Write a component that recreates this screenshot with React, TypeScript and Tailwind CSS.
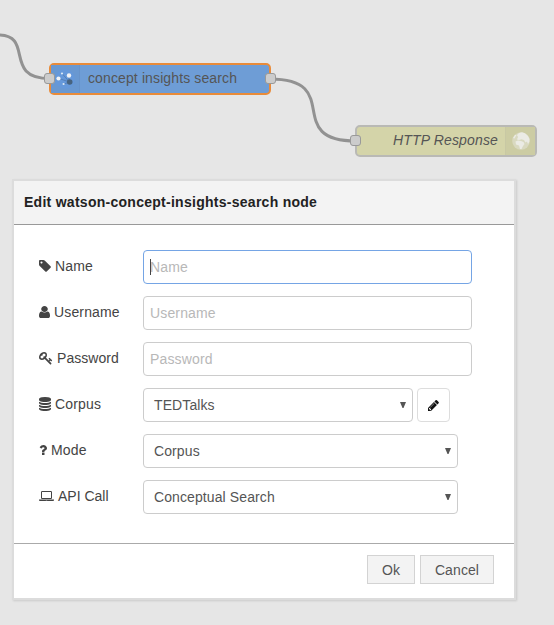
import type { ReactNode } from 'react';

const ICONS = {
  tag: { w: 1536, d: 'M448 448q0-53-37.5-90.5t-90.5-37.5-90.5 37.5-37.5 90.5 37.5 90.5 90.5 37.5 90.5-37.5 37.5-90.5zm1067 576q0 53-37 90l-491 492q-39 37-91 37-53 0-90-37l-715-716q-38-37-64.5-101t-26.5-117v-416q0-52 38-90t90-38h416q53 0 117 26.5t102 64.5l715 714q37 39 37 91z' },
  user: { w: 1280, d: 'M1280 1399q0 109-62.5 187t-150.5 78h-854q-88 0-150.5-78t-62.5-187q0-85 8.5-160.5t31.5-152 58.5-131 94-89 134.5-34.5q131 128 313 128t313-128q76 0 134.5 34.5t94 89 58.5 131 31.5 152 8.5 160.5zm-256-887q0 159-112.5 271.5t-271.5 112.5-271.5-112.5-112.5-271.5 112.5-271.5 271.5-112.5 271.5 112.5 112.5 271.5z' },
  key: { w: 1792, d: 'M832 512q0-80-56-136t-136-56-136 56-56 136q0 42 19 83-41-19-83-19-80 0-136 56t-56 136 56 136 136 56 136-56 56-136q0-42-19-83 41 19 83 19 80 0 136-56t56-136zm851 704q0 17-49 66t-66 49q-9 0-28.5-16t-36.5-33-38.5-40-24.5-26l-96 96 220 220q28 28 28 68 0 42-39 81t-81 39q-40 0-68-28l-671-671q-176 131-365 131-163 0-265.5-102.5t-102.5-265.5q0-160 95-313t248-248 313-95q163 0 265.5 102.5t102.5 265.5q0 189-131 365l355 355 96-96q-3-3-26-24.5t-40-38.5-33-36.5-16-28.5q0-17 49-66t66-49q13 0 23 10 6 6 46 44.5t82 79.5 86.5 86 73 78 28.5 41z' },
  database: { w: 1536, d: 'M768 768q237 0 443-43t325-127v170q0 69-103 128t-280 93.5-385 34.5-385-34.5-280-93.5-103-128v-170q119 84 325 127t443 43zm0 768q237 0 443-43t325-127v170q0 69-103 128t-280 93.5-385 34.5-385-34.5-280-93.5-103-128v-170q119 84 325 127t443 43zm0-384q237 0 443-43t325-127v170q0 69-103 128t-280 93.5-385 34.5-385-34.5-280-93.5-103-128v-170q119 84 325 127t443 43zm0-1152q208 0 385 34.5t280 93.5 103 128v128q0 69-103 128t-280 93.5-385 34.5-385-34.5-280-93.5-103-128v-128q0-69 103-128t280-93.5 385-34.5z' },
  question: { w: 1024, d: 'M704 1256v240q0 16-12 28t-28 12h-240q-16 0-28-12t-12-28v-240q0-16 12-28t28-12h240q16 0 28 12t12 28zm316-600q0 54-15.5 101t-35 76.5-55 59.5-57.5 43.5-61 35.5q-41 23-68.5 65t-27.5 67q0 17-12 32.5t-28 15.5h-240q-15 0-25.5-18.5t-10.5-37.5v-45q0-83 65-156.5t143-108.5q59-27 84-56t25-76q0-42-46.5-74t-107.5-32q-65 0-108 29-35 25-107 115-13 16-31 16-12 0-25-8l-164-125q-13-10-15.5-25t5.5-28q160-266 464-266 80 0 161 31t146 83 106 127.5 41 158.5z' },
  laptop: { w: 1920, d: 'M416 1280q-66 0-113-47t-47-113v-704q0-66 47-113t113-47h1088q66 0 113 47t47 113v704q0 66-47 113t-113 47h-1088zm-32-864v704q0 13 9.5 22.5t22.5 9.5h1088q13 0 22.5-9.5t9.5-22.5v-704q0-13-9.5-22.5t-22.5-9.5h-1088q-13 0-22.5 9.5t-9.5 22.5zm1376 928h160v96q0 40-47 68t-113 28h-1600q-66 0-113-28t-47-68v-96h1760zm-720 96q16 0 16-16t-16-16h-160q-16 0-16 16t16 16h160z' },
  pencil: { w: 1536, d: 'M363 1536l91-91-235-235-91 91v107h128v128h107zm523-928q0-22-22-22-10 0-17 7l-542 542q-7 7-7 17 0 22 22 22 10 0 17-7l542-542q7-7 7-17zm-54-192l416 416-832 832h-416v-416zm683 96q0 53-37 90l-166 166-416-416 166-165q36-38 90-38 53 0 91 38l235 234q37 39 37 91z' },
};

function Icon({ name, className = 'h-[14px]' }: { name: keyof typeof ICONS; className?: string }) {
  const { w, d } = ICONS[name];
  return (
    <svg viewBox={`0 0 ${w} 1792`} fill="currentColor" preserveAspectRatio="none" className={`shrink-0 ${className}`}>
      <path d={d} />
    </svg>
  );
}

function Row({ icon, iconSize, label, labelStyle, children }: { icon: keyof typeof ICONS; iconSize: string; label: string; labelStyle: string; children: ReactNode }) {
  return (
    <div className="flex h-[34px]">
      <label className="flex h-8 w-[104px] shrink-0 items-center text-[#444]">
        <Icon name={icon} className={iconSize} />
        <span className={labelStyle}>{label}</span>
      </label>
      {children}
    </div>
  );
}

function Field({ placeholder, focused }: { placeholder: string; focused?: boolean }) {
  return (
    <div className={`relative h-[34px] w-[329px] rounded border bg-white ${focused ? 'border-[#75a5e5]' : 'border-[#ccc]'}`}>
      <input placeholder={placeholder} className="h-full w-full bg-transparent px-[6px] tracking-[0.15px] text-[#555] outline-none placeholder:text-[#b8b8b8]" />
      {focused && <span className="absolute left-[6px] top-2 h-4 w-px bg-[#444]" />}
    </div>
  );
}

function Select({ value, width }: { value: string; width: string }) {
  return (
    <button className={`flex h-[34px] items-center justify-between rounded border border-[#ccc] bg-white pl-[10px] pr-[6px] tracking-[0.1px] text-[#555] ${width}`}>
      <span>{value}</span>
      <svg width="6" height="6" viewBox="0 0 6 6" fill="#555" className="-mt-px">
        <path d="M0 0h6L3.500 6h-1z" />
      </svg>
    </button>
  );
}

function Port({ place }: { place: string }) {
  return <span className={`absolute size-[11px] rounded-[3px] border border-[#999] bg-[#ccc] ${place}`} />;
}

export default function App() {
  return (
    <div className="relative h-[625px] w-[554px] overflow-hidden bg-[#e6e6e6] font-['Liberation_Sans',Arial,sans-serif] text-[14px] leading-5">
      <svg width="554" height="180" className="absolute left-0 top-0" fill="none" stroke="#929292" strokeWidth="3">
        <path d="M-2 35C35 35 2 78.500 50 78.500" />
        <path d="M270 79C345 79 282 141 356 141" />
      </svg>

      <div className="absolute left-[49px] top-[63px] flex h-8 w-[222px] items-center rounded-[5px] border-2 border-[#e98b39] bg-[#6e9dd6]">
        <div className="flex h-full w-[29px] items-center border-r border-[#6793ca] bg-[#6998d1]">
          <svg width="29" height="28" viewBox="0 0 29 28" className="shrink-0">
            <circle cx="14" cy="14" r="10" fill="#6598da" />
            <path d="M11 8.500L18.500 17M17.500 11L18.500 17M8 13.500L18.500 17M13 19L18.500 17" stroke="#4e79b0" strokeWidth=".8" />
            <circle cx="11" cy="8.500" r="1.100" fill="#dce8f5" />
            <circle cx="18" cy="10.500" r="2.200" fill="#f0f2f5" />
            <circle cx="7.500" cy="13.500" r="2.100" fill="#f0f2f5" />
            <circle cx="12.600" cy="19" r="1.100" fill="#dce8f5" />
            <circle cx="18.700" cy="17" r="2.800" fill="#47637f" />
          </svg>
        </div>
        <span className="-mt-0.5 pl-2 tracking-[0.12px] text-[#555]">concept insights search</span>
        <Port place="left-[-7px] top-[8px]" />
        <Port place="right-[-7px] top-[8px]" />
      </div>

      <div className="absolute left-[355px] top-[125px] flex h-8 w-[182px] items-center justify-end rounded-[5px] border-2 border-[#b9b9b5] bg-[#d4d4a9]">
        <span className="-mt-0.5 pr-[7px] italic tracking-[0.15px] text-[#555]">HTTP Response</span>
        <div className="flex h-full w-[30px] items-center border-l border-[#c8c8a4] bg-[#cccca3]">
          <svg width="29" height="28" viewBox="0 0 29 28" className="shrink-0">
            <circle cx="15" cy="14" r="8.800" fill="#d9d9c0" />
            <path d="M11 8L13 6L16 5.300L19 6.300L22 9L23.500 12L23.300 15L22 17L21 14.500L19.500 15.500L18 13L15.500 12.300L13 13L11 12.500L12 10zM9.500 14.500L12 13.500L15 14L17.500 15L18.500 17L17 19L15.500 22L14 22L13 18.500L10 17.500zM7 11L9 8L10.500 8L8.500 11.500z" fill="#ebebe4" />
          </svg>
        </div>
        <Port place="left-[-7px] top-[8px]" />
      </div>

      <div className="absolute left-3 top-[179px] flex h-[421px] w-[504px] flex-col border-2 border-[#dcdcdc] bg-white shadow-[1px_1px_2px_rgba(0,0,0,0.12)]">
        <header className="flex h-11 shrink-0 items-center border-b border-[#999] bg-[#f3f3f3] px-[10px] pb-px font-bold tracking-[0.27px] text-[#222]">
          Edit watson-concept-insights-search node
        </header>
        <form className="flex grow flex-col gap-3 pl-[25px] pt-[25px]">
          <Row icon="tag" iconSize="h-[14px] w-3" label="Name" labelStyle="pl-1 tracking-[0.15px]"><Field placeholder="Name" focused /></Row>
          <Row icon="user" iconSize="h-[14px] w-[11px]" label="Username" labelStyle="pl-1 tracking-[0.15px]"><Field placeholder="Username" /></Row>
          <Row icon="key" iconSize="h-[14px] w-[14px]" label="Password" labelStyle="pl-1 tracking-[0.05px]"><Field placeholder="Password" /></Row>
          <Row icon="database" iconSize="h-[14px] w-3" label="Corpus" labelStyle="pl-1 tracking-[0.15px]">
            <Select value="TEDTalks" width="w-[270px]" />
            <button className="ml-1 flex h-[34px] w-[33px] items-center justify-center rounded border border-[#ddd] bg-white text-[#111]"><Icon name="pencil" className="h-[13px] w-[11px]" /></button>
          </Row>
          <Row icon="question" iconSize="h-[14px] w-2" label="Mode" labelStyle="pl-1 tracking-[0.15px]"><Select value="Corpus" width="w-[315px]" /></Row>
          <Row icon="laptop" iconSize="h-[14px] w-[15px]" label="API Call" labelStyle="pl-1"><Select value="Conceptual Search" width="w-[315px]" /></Row>
        </form>
        <footer className="flex h-[55px] shrink-0 justify-end gap-[5px] border-t border-[#aaa] pr-5 pt-[11px] text-[#555]">
          <button className="h-[29px] w-12 border border-[#d3d3d3] bg-[#f3f3f3]">Ok</button>
          <button className="h-[29px] w-[74px] border border-[#d3d3d3] bg-[#f3f3f3] tracking-[0.1px]">Cancel</button>
        </footer>
      </div>
    </div>
  );
}
